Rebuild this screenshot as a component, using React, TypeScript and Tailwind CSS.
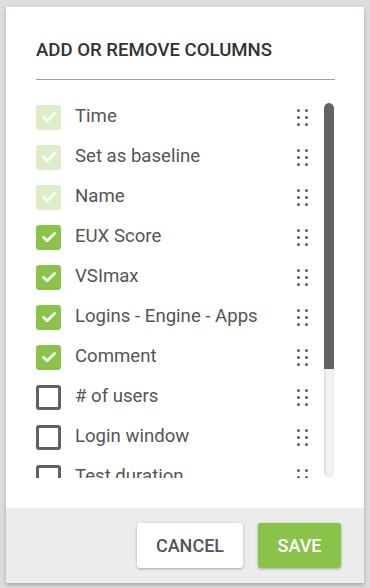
import React, { useState } from 'react';

type Column = { id: number; label: string; state: 'locked' | 'on' | 'off' };

const initialColumns: Column[] = [
  { id: 1, label: 'Time', state: 'locked' },
  { id: 2, label: 'Set as baseline', state: 'locked' },
  { id: 3, label: 'Name', state: 'locked' },
  { id: 4, label: 'EUX Score', state: 'on' },
  { id: 5, label: 'VSImax', state: 'on' },
  { id: 6, label: 'Logins - Engine - Apps', state: 'on' },
  { id: 7, label: 'Comment', state: 'on' },
  { id: 8, label: '# of users', state: 'off' },
  { id: 9, label: 'Login window', state: 'off' },
  { id: 10, label: 'Test duration', state: 'off' },
  { id: 11, label: 'Launcher', state: 'off' },
  { id: 12, label: 'Workload', state: 'off' },
];

const Check = () => (
  <svg width="24" height="24" viewBox="0 0 24 24" fill="none">
    <path d="M6.5 12.2l3.6 3.6 7.4-7.4" stroke="white" strokeWidth="2.8" strokeLinecap="round" strokeLinejoin="round" />
  </svg>
);

const Box = ({ state }: { state: Column['state'] }) => {
  if (state === 'off') {
    return <div className="w-[25px] h-[25px] rounded-[3px] border-[3px] border-[#616161] bg-white" />;
  }
  return (
    <div className={`w-[25px] h-[25px] rounded-[3px] flex items-center justify-center ${state === 'locked' ? 'bg-[#dcedc8]' : 'bg-[#8bc34a]'}`}>
      <Check />
    </div>
  );
};

// six-dot drag handle
const Grip = () => (
  <div className="grid grid-cols-2 gap-x-[5px] gap-y-[4px] w-[11px]">
    {[0, 1, 2, 3, 4, 5].map((i) => (
      <span key={i} className="w-[3px] h-[3px] rounded-full bg-[#5c5c5c]" />
    ))}
  </div>
);

const App = () => {
  const [columns, setColumns] = useState(initialColumns);

  const toggle = (id: number) => {
    setColumns(columns.map((c) => (c.id === id && c.state !== 'locked' ? { ...c, state: c.state === 'on' ? 'off' : 'on' } : c)));
  };

  return (
    <div className="w-[370px] h-[588px] bg-[#dcdde0] pt-[7px] pl-[6px] overflow-hidden" style={{ fontFamily: 'Roboto, "Liberation Sans", sans-serif' }}>
      <div className="w-[358px] h-[576px] bg-white flex flex-col shadow-[0_2px_4px_rgba(0,0,0,0.25)]">
        <div className="pl-[30px] pr-[29px] pt-[31px]">
          <h2 className="text-[18.6px] leading-[24px] font-medium text-[#333]">ADD OR REMOVE COLUMNS</h2>
          <div className="mt-[17px] h-px bg-[#a0a0a0]" />
        </div>

        <div className="flex pl-[30px] pr-[30px] mt-[17px]">
          <div className="flex-1 h-[381px] overflow-hidden">
            {columns.map((c) => (
              <div key={c.id} className="h-[40px] flex items-center cursor-pointer" onClick={() => toggle(c.id)}>
                <Box state={c.state} />
                <span className="ml-[14px] text-[18.6px] text-[#555] flex-1">{c.label}</span>
                <div className="mr-[16px]">
                  <Grip />
                </div>
              </div>
            ))}
          </div>
          <div className="w-[10px] h-[374px] mt-[6px] rounded-full bg-[#f2f2f2] shadow-[inset_1px_0_3px_rgba(0,0,0,0.12)] overflow-hidden">
            <div className="h-[266px] rounded-t-full bg-[#636363]" />
          </div>
        </div>

        <div className="mt-auto h-[75px] bg-[#ececec] flex justify-end items-start gap-[15px] pt-[15px] pr-[23px]">
          <button className="h-[45px] w-[106px] bg-white rounded-[3px] text-[18px] font-medium text-[#555] shadow-[0_1px_3px_rgba(0,0,0,0.3)]">
            CANCEL
          </button>
          <button className="h-[45px] w-[83px] bg-[#8bc34a] rounded-[3px] text-[18px] font-medium text-white shadow-[0_1px_3px_rgba(0,0,0,0.3)]">
            SAVE
          </button>
        </div>
      </div>
    </div>
  );
};

export default App;
